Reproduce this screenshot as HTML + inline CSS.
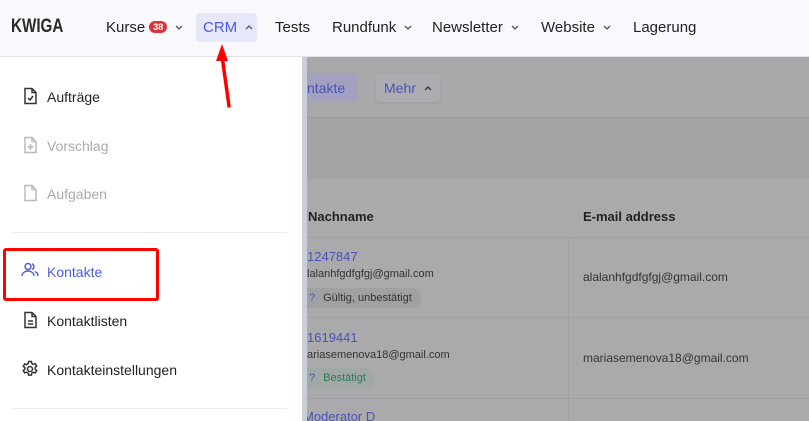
<!DOCTYPE html>
<html><head><meta charset="utf-8"><style>
*{margin:0;padding:0;box-sizing:border-box}
html,body{width:809px;height:421px;overflow:hidden}
body{font-family:"Liberation Sans",sans-serif;background:#a9a9ac;position:relative}
.hdr{position:absolute;left:0;top:0;width:809px;height:57px;background:#f8f8fd;border-bottom:1px solid #e2e2ea}
.logo{position:absolute;left:11px;top:16px;font-weight:bold;font-size:19px;color:#2a2a2a;transform:scaleX(.8);transform-origin:left top;white-space:nowrap}
.nav{position:absolute;top:19px;font-size:15px;color:#222;white-space:nowrap}
.chev{display:inline-block;margin-left:8px;vertical-align:2px}
.badge{display:inline-block;background:#d8353b;color:#fff;font-size:9px;font-weight:bold;border-radius:7px;padding:1px 4px;vertical-align:2px;margin-left:4px}
.crm{position:absolute;left:196px;top:13px;width:61px;height:29px;background:#e6e7fa;border-radius:4px;color:#4a5ae8;font-size:15px;padding:6px 0 0 7px;white-space:nowrap}
.side{position:absolute;left:0;top:57px;width:302px;height:364px;background:#fff}
.strip{position:absolute;left:302px;top:57px;width:5px;height:364px;background:#c9ced8}
.it{position:absolute;left:47px;font-size:14px;color:#222}
.ic{position:absolute;left:21px}
.dis{color:#aaa}
.sep{position:absolute;left:11px;width:276px;height:1px;background:#ececec}
.ov{position:absolute;white-space:nowrap}
</style></head><body>
<div class="hdr">
<div class="logo">KWIGA</div>
<div class="nav" style="left:106px">Kurse<span class="badge">38</span><svg class="chev" width="8" height="5"><path d="M1 1l3 3 3-3" fill="none" stroke="#555" stroke-width="1.3"/></svg></div>
<div class="crm">CRM<svg class="chev" width="8" height="5"><path d="M1 4l3-3 3 3" fill="none" stroke="#555" stroke-width="1.3"/></svg></div>
<div class="nav" style="left:275px">Tests</div>
<div class="nav" style="left:332px">Rundfunk<svg class="chev" width="8" height="5"><path d="M1 1l3 3 3-3" fill="none" stroke="#555" stroke-width="1.3"/></svg></div>
<div class="nav" style="left:432px">Newsletter<svg class="chev" width="8" height="5"><path d="M1 1l3 3 3-3" fill="none" stroke="#555" stroke-width="1.3"/></svg></div>
<div class="nav" style="left:541px">Website<svg class="chev" width="8" height="5"><path d="M1 1l3 3 3-3" fill="none" stroke="#555" stroke-width="1.3"/></svg></div>
<div class="nav" style="left:633px">Lagerung</div>
</div>
<div style="position:absolute;left:307px;top:57px;width:502px;height:61px;background:#a8a8ab;border-bottom:1px solid #9c9c9f"></div>
<div style="position:absolute;left:307px;top:118px;width:502px;height:60px;background:#a3a3a5"></div>
<div style="position:absolute;left:307px;top:178px;width:502px;height:243px;background:#aaaaac"></div>
<div style="position:absolute;left:290px;top:73px;width:68px;height:29px;background:#a3a1c0;border-radius:4px"></div>
<div class="ov" style="left:307px;top:80px;font-size:14px;color:#4a52b5">ntakte</div>
<div style="position:absolute;left:376px;top:74px;width:64px;height:28px;background:#adadb1;border-radius:4px;box-shadow:0 1px 2px #999"></div>
<div class="ov" style="left:384px;top:80px;font-size:14px;color:#4a52b5">Mehr<svg class="chev" width="8" height="5"><path d="M1 4l3-3 3 3" fill="none" stroke="#333" stroke-width="1.3"/></svg></div>
<div class="ov" style="left:308px;top:209px;font-size:13px;font-weight:bold;color:#222">Nachname</div>
<div class="ov" style="left:583px;top:209px;font-size:13px;font-weight:bold;color:#222">E-mail address</div>
<div style="position:absolute;left:307px;top:237px;width:502px;height:1px;background:#a0a0a3"></div>
<div style="position:absolute;left:307px;top:317px;width:502px;height:1px;background:#a0a0a3"></div>
<div style="position:absolute;left:307px;top:398px;width:502px;height:1px;background:#a0a0a3"></div>
<div style="position:absolute;left:568px;top:237px;width:1px;height:184px;background:#a0a0a3"></div>
<div class="ov" style="left:307px;top:249px;font-size:13px;color:#4a52b5">1247847</div>
<div class="ov" style="left:307px;top:268px;font-size:11px;color:#333">lalanhfgdfgfgj@gmail.com</div>
<div style="position:absolute;left:300px;top:288px;width:121px;height:20px;background:#a1a1a4;border-radius:10px"></div>
<div class="ov" style="left:309px;top:292px;font-size:11px;color:#333"><span style="color:#4a52b5;margin-right:8px">?</span>Gültig, unbestätigt</div>
<div class="ov" style="left:583px;top:270px;font-size:12px;color:#333">alalanhfgdfgfgj@gmail.com</div>
<div class="ov" style="left:307px;top:330px;font-size:13px;color:#4a52b5">1619441</div>
<div class="ov" style="left:307px;top:349px;font-size:11px;color:#333">ariasemenova18@gmail.com</div>
<div style="position:absolute;left:300px;top:368px;width:75px;height:20px;background:#a1a8a6;border-radius:10px"></div>
<div class="ov" style="left:309px;top:372px;font-size:11px;color:#2f7a56"><span style="color:#4a52b5;margin-right:8px">?</span>Bestätigt</div>
<div class="ov" style="left:583px;top:351px;font-size:12px;color:#333">mariasemenova18@gmail.com</div>
<div class="ov" style="left:303px;top:409px;font-size:13px;color:#4a52b5">Moderator D</div>
<div class="side"></div>
<div class="strip"></div>
<svg class="ic" style="top:87px" width="18" height="18" fill="none" stroke="#333" stroke-width="1.5"><path d="M4 1.5h7l4 4v11H4z M11 1.5v4h4 M7 11l2 2 3-4"/></svg>
<div class="it" style="top:89px">Aufträge</div>
<svg class="ic" style="top:136px" width="18" height="18" fill="none" stroke="#bbb" stroke-width="1.5"><path d="M4 1.5h7l4 4v11H4z M11 1.5v4h4 M9.5 8v6 M6.5 11h6"/></svg>
<div class="it dis" style="top:138px">Vorschlag</div>
<svg class="ic" style="top:184px" width="18" height="18" fill="none" stroke="#bbb" stroke-width="1.5"><path d="M4 1.5h7l4 4v11H4z M11 1.5v4h4"/></svg>
<div class="it dis" style="top:186px">Aufgaben</div>
<div class="sep" style="top:232px"></div>
<div style="position:absolute;left:3px;top:248px;width:156px;height:53px;border:3px solid #f00;border-radius:3px"></div>
<svg class="ic" style="top:262px" width="18" height="16" fill="none" stroke="#4a5ae8" stroke-width="1.4"><circle cx="7" cy="4.5" r="3"/><path d="M1 14c0-3 3-5 6-5s6 2 6 5 M11 1.8a3 3 0 0 1 0 5.6 M14 9.5c2 1 3 2.5 3 4.5"/></svg>
<div class="it" style="top:264px;color:#4a5ae8">Kontakte</div>
<svg class="ic" style="top:311px" width="18" height="18" fill="none" stroke="#333" stroke-width="1.5"><path d="M4 1.5h7l4 4v11H4z M11 1.5v4h4 M7 10h5 M7 13h5"/></svg>
<div class="it" style="top:313px">Kontaktlisten</div>
<svg class="ic" style="top:360px" width="18" height="18" fill="none" stroke="#333" stroke-width="1.5"><circle cx="9" cy="9" r="2.5"/><path d="M7.6 1.5h2.8l.4 2 1.6.9 1.9-.7 1.4 2.4-1.5 1.3v1.8l1.5 1.3-1.4 2.4-1.9-.7-1.6.9-.4 2H7.6l-.4-2-1.6-.9-1.9.7-1.4-2.4 1.5-1.3V7.6L2.3 6.3l1.4-2.4 1.9.7 1.6-.9z"/></svg>
<div class="it" style="top:362px">Kontakteinstellungen</div>
<div class="sep" style="top:408px"></div>
<svg style="position:absolute;left:214px;top:42px;z-index:10" width="22" height="68"><path d="M8 2 L2 19 L14 19 Z" fill="#f00"/><path d="M8 14 L15 64" stroke="#f00" stroke-width="3.5" stroke-linecap="round"/></svg>
</body></html>
